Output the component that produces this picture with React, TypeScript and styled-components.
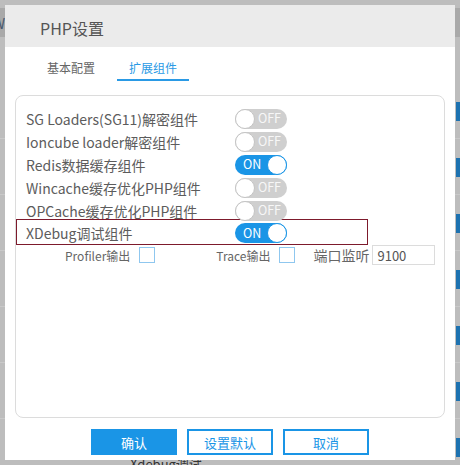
import React from "react";
import styled, { createGlobalStyle } from "styled-components";

const BLUE = "#1a95e6";
const FONT = `"Noto Sans CJK SC", "Noto Sans", sans-serif`;

const GlobalStyle = createGlobalStyle`
  html, body { margin: 0; padding: 0; }
  body {
    width: 460px;
    height: 465px;
    overflow: hidden;
    background: #bdbdbd;
    font-family: ${FONT};
  }
`;

const Page = styled.div`
  position: relative;
  width: 460px;
  height: 465px;
  overflow: hidden;
  background: #bdbdbd;
`;

const BgHeader = styled.div`
  margin-top: 8px;
  height: 29px;
  background: #a9a9a9;
  display: flex;
  align-items: center;
  font-size: 15px;
  color: #4a5a70;
  text-indent: -8px;
`;

const BgSpacer = styled.div`
  height: 46px;
`;

const BgRow = styled.div`
  position: relative;
  height: 55px;
  border-bottom: 1px solid #c9c9c9;
`;

const BgBadge = styled.span`
  position: absolute;
  left: 456px;
  top: 19px;
  width: 22px;
  height: 19px;
  background: #1d72b0;
`;

const BgText = styled.span`
  position: absolute;
  left: 130px;
  top: 454px;
  font-size: 13px;
  color: #333;
`;

const Modal = styled.div`
  position: absolute;
  left: 5px;
  top: 5px;
  width: 450px;
  height: 455px;
  background: #fff;
  display: flex;
  flex-direction: column;
  box-sizing: border-box;
`;

const Header = styled.div`
  height: 42px;
  flex: none;
  background: #ebebeb;
  display: flex;
  align-items: center;
  padding: 3px 0 0 35px;
  box-sizing: border-box;
  font-size: 16px;
  color: #555;
`;

const Tabs = styled.div`
  display: flex;
  gap: 10px;
  margin: 10px 0 0 30px;
  flex: none;
`;

const Tab = styled.div<{ $active?: boolean }>`
  height: 24px;
  box-sizing: border-box;
  padding: 0 12px;
  line-height: 22px;
  font-size: 12px;
  color: ${(p) => (p.$active ? "#2a9ae5" : "#666")};
  border-bottom: 2px solid ${(p) => (p.$active ? "#2a9ae5" : "transparent")};
`;

const Panel = styled.div`
  flex: 1;
  margin: 14px 10px 0;
  border: 1px solid #dcdcdc;
  border-radius: 8px;
  padding-top: 11px;
  display: flex;
  flex-direction: column;
`;

const OptionRow = styled.div<{ $highlight?: boolean }>`
  display: grid;
  grid-template-columns: 209px auto;
  align-items: center;
  width: 352px;
  box-sizing: border-box;
  height: ${(p) => (p.$highlight ? "26px" : "23px")};
  margin-top: ${(p) => (p.$highlight ? "-3px" : "0")};
  padding: ${(p) => (p.$highlight ? "2px 0 0 9px" : "0 0 0 10px")};
  border: ${(p) => (p.$highlight ? "1px solid #7d1a2c" : "none")};
`;

const OptionLabel = styled.span`
  font-size: 14px;
  color: #5c5c5c;
  white-space: nowrap;
`;

const Switch = styled.span<{ $on?: boolean }>`
  position: relative;
  display: flex;
  align-items: center;
  justify-content: ${(p) => (p.$on ? "flex-start" : "flex-end")};
  width: 52px;
  height: 20px;
  border-radius: 10px;
  box-sizing: border-box;
  padding: ${(p) => (p.$on ? "0 0 0 8px" : "0 6px 0 0")};
  background: ${(p) => (p.$on ? BLUE : "#cfcfcf")};
  font-size: 12.5px;
  color: ${(p) => (p.$on ? "#fff" : "#f7f7f7")};
  line-height: 1;
`;

const Knob = styled.span<{ $on?: boolean }>`
  position: absolute;
  top: 0;
  ${(p) => (p.$on ? "right: 0;" : "left: 0;")}
  width: 20px;
  height: 20px;
  border-radius: 50%;
  box-sizing: border-box;
  background: #fff;
  border: 1px solid ${(p) => (p.$on ? BLUE : "#c4c4c4")};
`;

const SubRow = styled.div`
  display: flex;
  align-items: center;
  height: 20px;
  padding-left: 49px;
`;

const SubLabel = styled.span<{ $big?: boolean }>`
  font-size: ${(p) => (p.$big ? "14px" : "12px")};
  color: #666;
  white-space: nowrap;
`;

const Check = styled.span<{ $gapAfter: number }>`
  width: 16px;
  height: 16px;
  box-sizing: border-box;
  border: 1px solid #8fc7ef;
  background: #fff;
  margin: 0 ${(p) => p.$gapAfter}px 0 9px;
`;

const PortInput = styled.input`
  width: 63px;
  height: 20px;
  box-sizing: border-box;
  margin-left: 3px;
  border: 1px solid #dcdcdc;
  padding: 0 4px;
  font-family: ${FONT};
  font-size: 13px;
  color: #555;
  outline: none;
`;

const Footer = styled.div`
  flex: none;
  display: flex;
  justify-content: center;
  gap: 10px;
  padding: 11px 0 5px;
`;

const Button = styled.button<{ $primary?: boolean }>`
  width: 86px;
  height: 26px;
  box-sizing: border-box;
  font-family: ${FONT};
  font-size: 13px;
  border: ${(p) => (p.$primary ? "none" : `2px solid ${BLUE}`)};
  background: ${(p) => (p.$primary ? BLUE : "#fff")};
  color: ${(p) => (p.$primary ? "#fff" : BLUE)};
  padding: 0;
  cursor: pointer;
`;

const options: { label: string; on: boolean }[] = [
  { label: "SG Loaders(SG11)解密组件", on: false },
  { label: "Ioncube loader解密组件", on: false },
  { label: "Redis数据缓存组件", on: true },
  { label: "Wincache缓存优化PHP组件", on: false },
  { label: "OPCache缓存优化PHP组件", on: false },
];

function Toggle({ on }: { on: boolean }) {
  return (
    <Switch $on={on}>
      {on ? "ON" : "OFF"}
      <Knob $on={on} />
    </Switch>
  );
}

export default function App() {
  return (
    <Page>
      <GlobalStyle />
      <BgHeader>W</BgHeader>
      <BgSpacer />
      {Array.from({ length: 7 }).map((_, i) => (
        <BgRow key={i}>
          <BgBadge />
        </BgRow>
      ))}
      <BgText>Xdebug调试</BgText>
      <Modal>
        <Header>PHP设置</Header>
        <Tabs>
          <Tab>基本配置</Tab>
          <Tab $active>扩展组件</Tab>
        </Tabs>
        <Panel>
          {options.map((o) => (
            <OptionRow key={o.label}>
              <OptionLabel>{o.label}</OptionLabel>
              <Toggle on={o.on} />
            </OptionRow>
          ))}
          <OptionRow $highlight>
            <OptionLabel>XDebug调试组件</OptionLabel>
            <Toggle on={true} />
          </OptionRow>
          <SubRow>
            <SubLabel>Profiler输出</SubLabel>
            <Check $gapAfter={61} />
            <SubLabel>Trace输出</SubLabel>
            <Check $gapAfter={18} />
            <SubLabel $big>端口监听</SubLabel>
            <PortInput defaultValue="9100" />
          </SubRow>
        </Panel>
        <Footer>
          <Button $primary>确认</Button>
          <Button>设置默认</Button>
          <Button>取消</Button>
        </Footer>
      </Modal>
    </Page>
  );
}
